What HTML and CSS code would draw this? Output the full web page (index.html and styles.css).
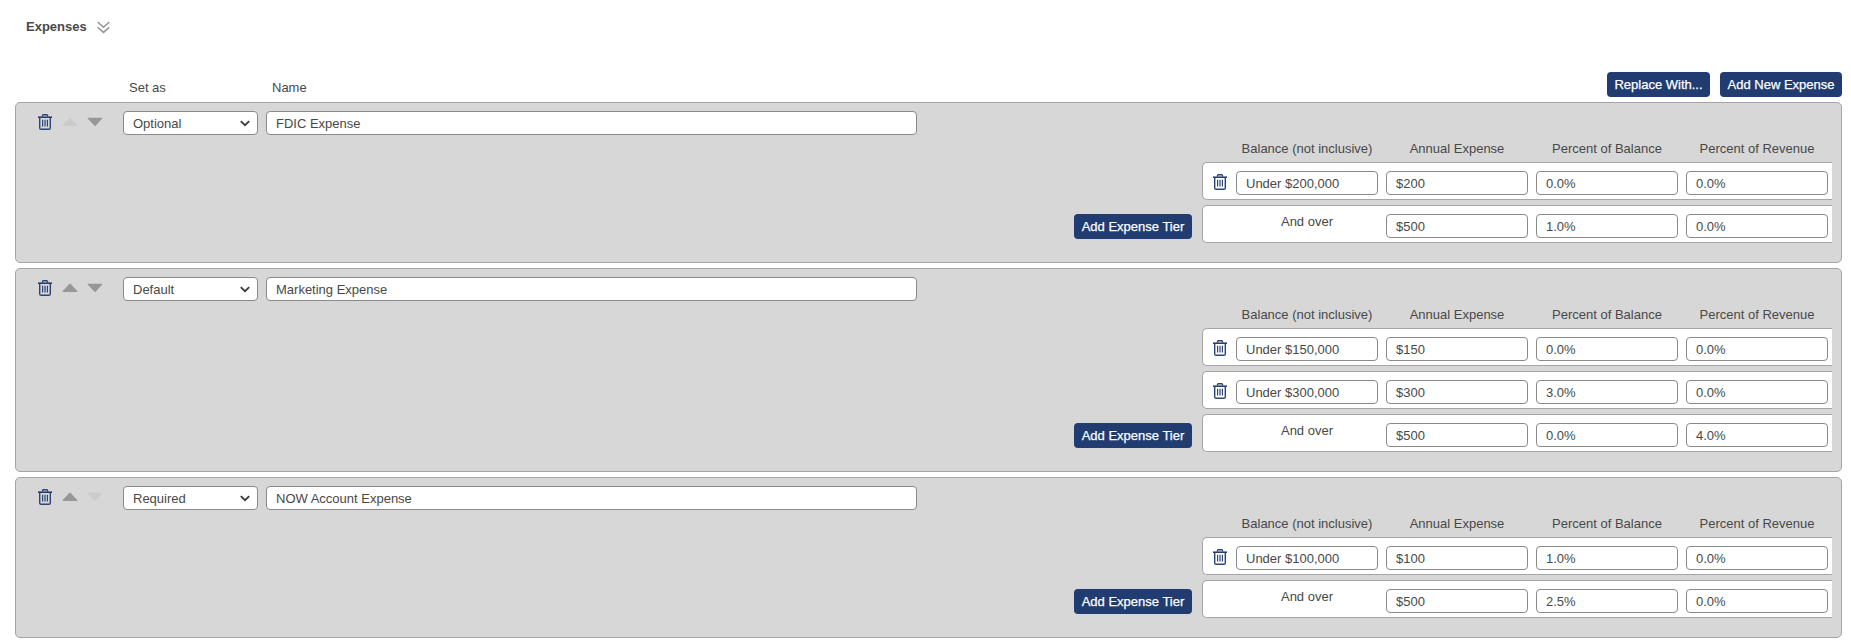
FILE: index.html
```
<!DOCTYPE html>
<html lang="en">
<head>
<meta charset="utf-8">
<title>Expenses</title>
<link rel="stylesheet" href="styles.css">
</head>
<body>

<!-- shared icons -->
<svg class="defs" width="0" height="0">
 <symbol id="trash" viewBox="0 0 14 16">
  <path d="M4.5 2.5v-1q0-.8.8-.8h3.400q.8 0 .8.8v1M1.700 3.500v10.400q0 1.400 1.400 1.400h7.800q1.400 0 1.400-1.400V3.500" fill="none" stroke="#2b4579" stroke-width="1.400"/>
  <path d="M0 3.200h14" fill="none" stroke="#1f3560" stroke-width="1.500"/>
  <path d="M4.600 5.700v6.800M7 5.700v6.800M9.400 5.700v6.800" fill="none" stroke="#2b4579" stroke-width="1.200"/>
 </symbol>
 <symbol id="up" viewBox="0 0 17 10"><path d="M1 9.2Q0 9.200 .8 8.300L7.600 .9Q8.500 0 9.400 .9L16.200 8.300Q17 9.200 16 9.200Z"/></symbol>
 <symbol id="down" viewBox="0 0 17 10"><path d="M1 .5Q0 .5 .8 1.400L7.600 8.800Q8.500 9.700 9.400 8.800L16.200 1.400Q17 .5 16 .5Z"/></symbol>
 <symbol id="chevron" viewBox="0 0 10 7"><path d="M.8 1.200L5 5.200L9.200 1.200" fill="none" stroke="#3a3a3a" stroke-width="1.800"/></symbol>
</svg>

<div class="title">
 <h2>Expenses</h2>
 <svg width="13" height="13" viewBox="0 0 13 13"><path d="M.7 1l5.800 5.200L12.300 1M.7 6.200l5.800 5.200 5.800-5.200" fill="none" stroke="#939393" stroke-width="1.500"/></svg>
</div>

<div class="toolbar">
 <span class="colSet">Set as</span>
 <span class="colName">Name</span>
 <button class="btn">Replace With...</button>
 <button class="btn">Add New Expense</button>
</div>

<div class="expense">
 <div class="top">
  <svg class="trash"><use href="#trash"/></svg>
  <svg class="arrow up disabled"><use href="#up"/></svg>
  <svg class="arrow down"><use href="#down"/></svg>
  <div class="field select">Optional<svg width="10" height="7"><use href="#chevron"/></svg></div>
  <div class="field name">FDIC Expense</div>
 </div>
 <div class="heads"><span>Balance (not inclusive)</span><span>Annual Expense</span><span>Percent of Balance</span><span>Percent of Revenue</span></div>
 <div class="line">
  <div class="tier"><svg class="trash"><use href="#trash"/></svg><div class="field">Under $200,000</div><div class="field">$200</div><div class="field">0.0%</div><div class="field">0.0%</div></div>
 </div>
 <div class="line">
  <button class="btn">Add Expense Tier</button>
  <div class="tier"><span class="over">And over</span><div class="field">$500</div><div class="field">1.0%</div><div class="field">0.0%</div></div>
 </div>
</div>

<div class="expense">
 <div class="top">
  <svg class="trash"><use href="#trash"/></svg>
  <svg class="arrow up"><use href="#up"/></svg>
  <svg class="arrow down"><use href="#down"/></svg>
  <div class="field select">Default<svg width="10" height="7"><use href="#chevron"/></svg></div>
  <div class="field name">Marketing Expense</div>
 </div>
 <div class="heads"><span>Balance (not inclusive)</span><span>Annual Expense</span><span>Percent of Balance</span><span>Percent of Revenue</span></div>
 <div class="line">
  <div class="tier"><svg class="trash"><use href="#trash"/></svg><div class="field">Under $150,000</div><div class="field">$150</div><div class="field">0.0%</div><div class="field">0.0%</div></div>
 </div>
 <div class="line">
  <div class="tier"><svg class="trash"><use href="#trash"/></svg><div class="field">Under $300,000</div><div class="field">$300</div><div class="field">3.0%</div><div class="field">0.0%</div></div>
 </div>
 <div class="line">
  <button class="btn">Add Expense Tier</button>
  <div class="tier"><span class="over">And over</span><div class="field">$500</div><div class="field">0.0%</div><div class="field">4.0%</div></div>
 </div>
</div>

<div class="expense">
 <div class="top">
  <svg class="trash"><use href="#trash"/></svg>
  <svg class="arrow up"><use href="#up"/></svg>
  <svg class="arrow down disabled"><use href="#down"/></svg>
  <div class="field select">Required<svg width="10" height="7"><use href="#chevron"/></svg></div>
  <div class="field name">NOW Account Expense</div>
 </div>
 <div class="heads"><span>Balance (not inclusive)</span><span>Annual Expense</span><span>Percent of Balance</span><span>Percent of Revenue</span></div>
 <div class="line">
  <div class="tier"><svg class="trash"><use href="#trash"/></svg><div class="field">Under $100,000</div><div class="field">$100</div><div class="field">1.0%</div><div class="field">0.0%</div></div>
 </div>
 <div class="line">
  <button class="btn">Add Expense Tier</button>
  <div class="tier"><span class="over">And over</span><div class="field">$500</div><div class="field">2.5%</div><div class="field">0.0%</div></div>
 </div>
</div>

</body>
</html>
```
FILE: styles.css
```
* { box-sizing: border-box; }
body {
margin: 0; padding: 0 9px 0 15px; background: #fff;
font-family: "Liberation Sans", Arial, sans-serif; font-size: 13px; color: #484848;
}
.defs { display: none; }
svg { display: block; flex: none; }

.title { display: flex; align-items: center; height: 54px; padding-left: 11px; }
.title h2 { margin: 0 10px 0 0; font-size: 13px; line-height: 16px; }

.toolbar { display: flex; align-items: center; height: 48px; padding-top: 13px; }
.colSet { width: 143px; margin-left: 114px; padding-top: 5px; }
.colName { flex: 1; padding-top: 5px; }
.btn {
height: 25px; padding: 0 7px; border: 0; border-radius: 4px;
background: #203c70; color: #fff; white-space: nowrap;
font: 13px/25px "Liberation Sans", Arial, sans-serif;
-webkit-text-stroke: .25px #fff;
}
.toolbar .btn { width: 103px; margin-top: -1px; }
.toolbar .btn + .btn { width: 122px; margin-left: 10px; }

.expense {
margin-bottom: 5px; padding: 8px 9px 14px 22px;
background: #d7d7d7; border: 1px solid #a5a5a5; border-radius: 5px;
}
.top { display: flex; height: 24px; }
.trash { width: 14px; height: 16px; margin-top: 3px; }
.arrow { width: 16px; height: 10px; fill: #979797; }
.up { margin: 6px 0 0 10px; }
.down { margin: 6px 0 0 9px; }
.arrow.disabled { fill: #cbcbcb; }

.field {
width: 142px; height: 24px; padding-left: 9px;
background: #fff; border: 1px solid #8a8a8a; border-radius: 4px; line-height: 23px;
}
.select { display: flex; justify-content: space-between; align-items: center; width: 135px; margin-left: 20px; padding-right: 7px; }
.name { width: 651px; margin-left: 8px; }

.heads { display: flex; justify-content: flex-end; height: 27px; text-align: center; line-height: 27px; }
.heads span { width: 150px; }

.line { display: flex; justify-content: flex-end; margin-bottom: 5px; }
.line .btn { width: 118px; margin: 9px 10px 0 0; }
.tier {
display: flex; gap: 8px; width: 630px; height: 38px; padding: 8px 4px 0 10px;
background: #fff; border: 1px solid #a5a5a5; border-right: 0; border-radius: 5px 0 0 5px;
}
.tier .trash { margin-right: 1px; }
.over { width: 165px; padding: 0 0 0 23px; text-align: center; line-height: 15px; }
```
